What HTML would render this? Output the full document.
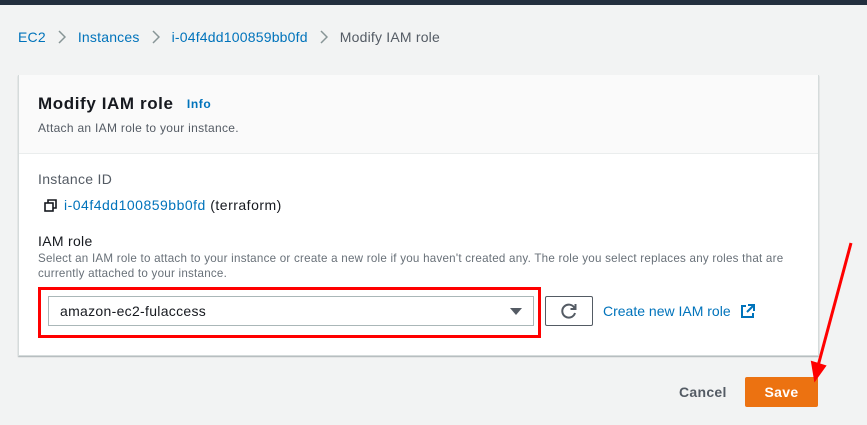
<!DOCTYPE html>
<html><head><style>
*{margin:0;padding:0;box-sizing:border-box}
body{width:867px;height:425px;background:#f2f3f3;font-family:"Liberation Sans",Arial,sans-serif;position:relative;overflow:hidden;color:#16191f;letter-spacing:0.3px}
.abs{position:absolute;white-space:nowrap}
.link{color:#0073bb}
.sep{display:inline-block;width:32px;text-align:center;vertical-align:middle}
</style></head><body>
<div class="abs" style="left:0;top:0;width:867px;height:5px;background:#232f3e"></div>
<div class="abs" style="left:18px;top:29px;font-size:14px;color:#545b64;letter-spacing:0.2px">
<span class="link">EC2</span><span class="sep"><svg width="8" height="14" viewBox="0 0 8 14"><path d="M1 1l6 6-6 6" fill="none" stroke="#879596" stroke-width="1.5"/></svg></span><span class="link">Instances</span><span class="sep"><svg width="8" height="14" viewBox="0 0 8 14"><path d="M1 1l6 6-6 6" fill="none" stroke="#879596" stroke-width="1.5"/></svg></span><span class="link">i-04f4dd100859bb0fd</span><span class="sep"><svg width="8" height="14" viewBox="0 0 8 14"><path d="M1 1l6 6-6 6" fill="none" stroke="#879596" stroke-width="1.5"/></svg></span>Modify IAM role</div>
<div class="abs" style="left:18px;top:75px;width:801px;height:281px;background:#fff;border:1px solid #d5dbdb;border-top:none;box-shadow:0 1px 1px rgba(0,28,36,.3)">
 <div style="height:79px;background:#fafafa;border-bottom:1px solid #eaeded"></div>
</div>
<div class="abs" style="left:38px;top:94px;font-size:17px;font-weight:bold;letter-spacing:0.6px">Modify IAM role <span style="font-size:12px;color:#0073bb;margin-left:8px;vertical-align:1px">Info</span></div>
<div class="abs" style="left:38px;top:121px;font-size:12px;color:#545b64">Attach an IAM role to your instance.</div>
<div class="abs" style="left:38px;top:171px;font-size:14px;color:#545b64">Instance ID</div>
<svg class="abs" style="left:44px;top:199px" width="14" height="13" viewBox="0 0 14 13"><rect x="1" y="4" width="8" height="8" fill="none" stroke="#16191f" stroke-width="1.6"/><path d="M4 4V1h8v8H9" fill="none" stroke="#16191f" stroke-width="1.6"/></svg>
<div class="abs" style="left:64px;top:197px;font-size:14px;letter-spacing:0.5px"><span class="link">i-04f4dd100859bb0fd</span> (terraform)</div>
<div class="abs" style="left:38px;top:233px;font-size:14px;color:#16191f">IAM role</div>
<div class="abs" style="left:38px;top:251px;font-size:11.6px;color:#687078;line-height:15px;letter-spacing:0.24px">Select an IAM role to attach to your instance or create a new role if you haven't created any. The role you select replaces any roles that are<br>currently attached to your instance.</div>
<div class="abs" style="left:38px;top:287px;width:503px;height:51px;border:3px solid #f00"></div>
<div class="abs" style="left:48px;top:296px;width:486px;height:30px;border:1px solid #aab7b8;background:#fff;font-size:14px;padding:6px 0 0 11px">amazon-ec2-fulaccess
 <div style="position:absolute;right:11px;top:11px;width:0;height:0;border-left:6px solid transparent;border-right:6px solid transparent;border-top:7px solid #545b64"></div></div>
<div class="abs" style="left:545px;top:296px;width:48px;height:30px;border:1px solid #545b64;border-radius:2px;background:#fff"></div>
<svg class="abs" style="left:559px;top:301px" width="20" height="20" viewBox="0 0 20 20"><path d="M15.5 7A6.5 6.5 0 1 0 16 12" fill="none" stroke="#545b64" stroke-width="2"/><path d="M16.5 3v5h-5" fill="none" stroke="#545b64" stroke-width="2"/></svg>
<div class="abs" style="left:603px;top:303px;font-size:14px;letter-spacing:0"><span class="link">Create new IAM role</span></div>
<svg class="abs" style="left:740px;top:304px" width="15" height="15" viewBox="0 0 15 15"><path d="M6 2H2v11h11V9" fill="none" stroke="#0073bb" stroke-width="2"/><path d="M8 1h6v6M14 1L7 8" fill="none" stroke="#0073bb" stroke-width="2"/></svg>
<div class="abs" style="left:679px;top:384px;font-size:14px;font-weight:bold;color:#545b64">Cancel</div>
<div class="abs" style="left:745px;top:377px;width:73px;height:30px;background:#ec7211;border-radius:2px;color:#fff;font-size:14px;font-weight:bold;text-align:center;line-height:30px">Save</div>
<svg class="abs" style="left:0;top:0" width="867" height="425"><line x1="851" y1="243" x2="818" y2="366" stroke="#f00" stroke-width="3"/><path d="M812 362L815 380L825 366Z" fill="#f00" stroke="#f00" stroke-width="2"/></svg>
</body></html>
